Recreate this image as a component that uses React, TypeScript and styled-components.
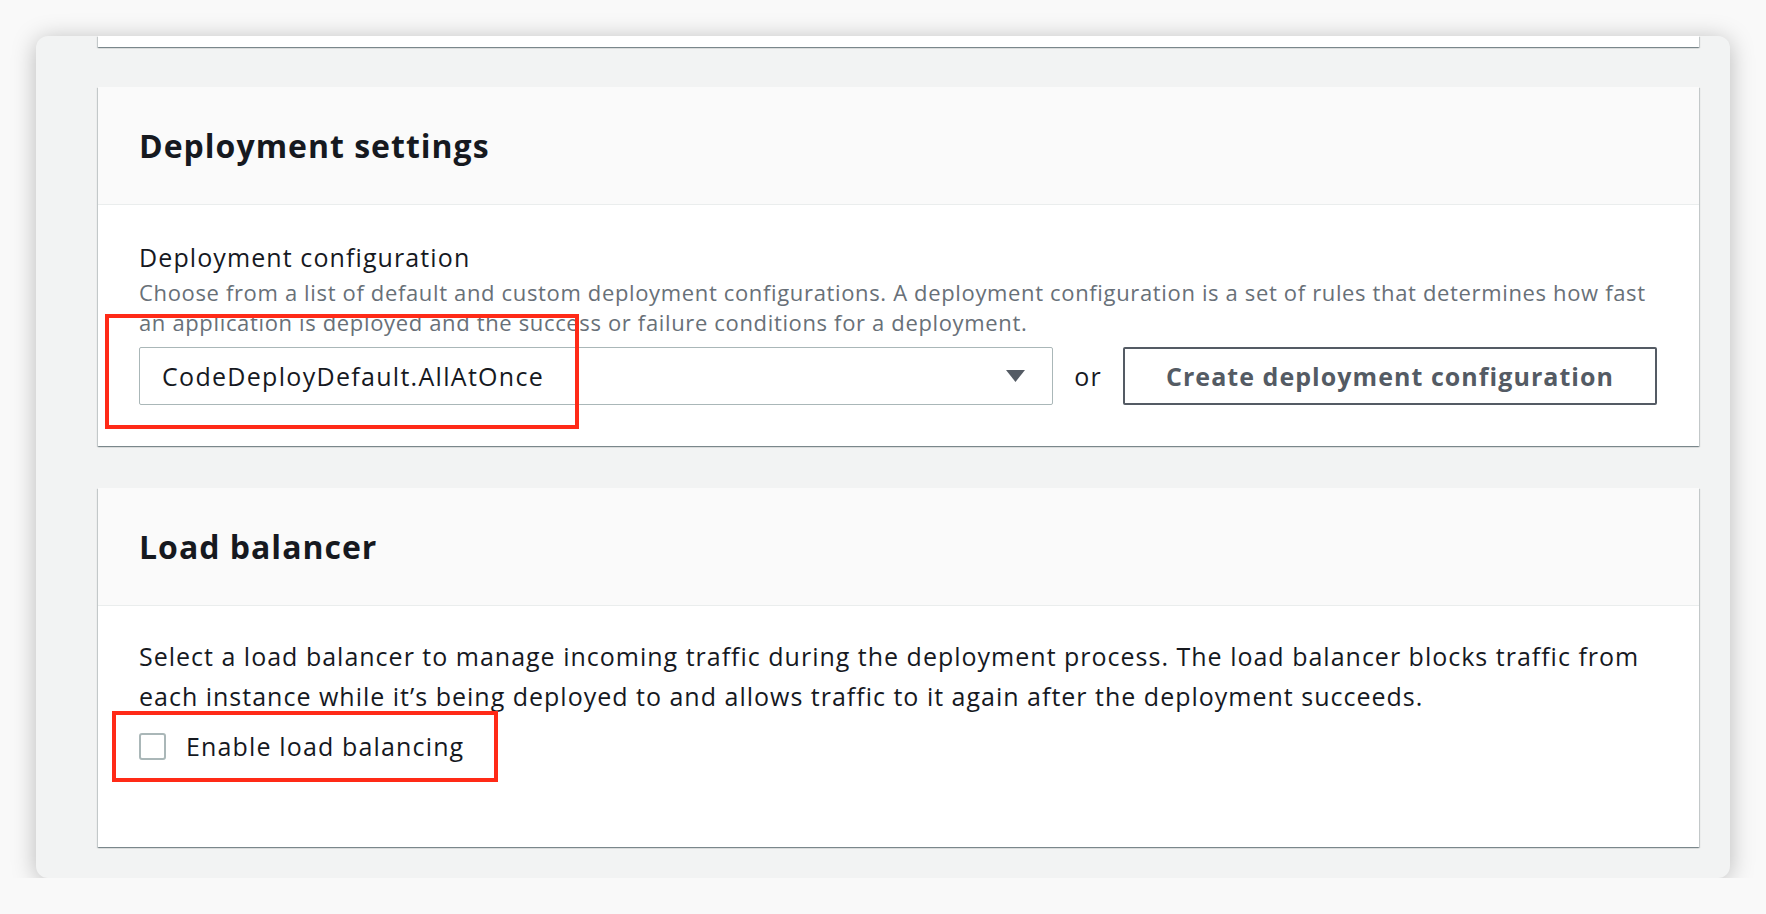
import styled, { createGlobalStyle } from 'styled-components';

const GlobalStyle = createGlobalStyle`
  html, body {
    margin: 0;
    padding: 0;
    background: #f9f9f9;
  }
  body {
    font-family: "Open Sans", "Liberation Sans", Arial, sans-serif;
    color: #16191f;
  }
`;

const Page = styled.div`
  padding: 36px 0 0 36px;
`;

const Frame = styled.div`
  width: 1694px;
  height: 842px;
  box-sizing: border-box;
  padding: 0 31px 0 62px;
  background: #f2f3f3;
  border-radius: 12px;
  box-shadow: 0 3px 24px rgba(0, 0, 0, 0.26);
  overflow: hidden;
  display: flex;
  flex-direction: column;
`;

const cardShadow = `
  box-shadow: 0 1px 1px 0 rgba(0, 28, 36, 0.3),
    1px 1px 1px 0 rgba(0, 28, 36, 0.15),
    -1px 1px 1px 0 rgba(0, 28, 36, 0.15);
`;

const CardTail = styled.div`
  height: 11px;
  flex-shrink: 0;
  background: #fff;
  ${cardShadow}
`;

const Card = styled.section<{ top: number }>`
  position: relative;
  flex-shrink: 0;
  margin-top: ${(p) => p.top}px;
  background: #fff;
  ${cardShadow}
`;

const CardHeader = styled.header`
  height: 117px;
  display: flex;
  align-items: center;
  padding: 0 41px;
  background: #fafafa;
  border-bottom: 1px solid #eaeded;
`;

const Heading = styled.h2`
  margin: 0;
  font-size: 32px;
  font-weight: 700;
  color: #16191f;
  letter-spacing: 1px;
`;

const CardBody = styled.div<{ pad: string }>`
  padding: ${(p) => p.pad};
`;

const Label = styled.div`
  font-size: 25px;
  line-height: 30px;
  letter-spacing: 1.1px;
  color: #16191f;
  margin-bottom: 5px;
`;

const Description = styled.div`
  font-size: 22px;
  line-height: 30px;
  letter-spacing: 0.65px;
  color: #687078;
`;

const ControlRow = styled.div`
  display: flex;
  align-items: center;
  margin-top: 10px;
`;

const Select = styled.div`
  width: 914px;
  height: 58px;
  box-sizing: border-box;
  display: flex;
  align-items: center;
  justify-content: space-between;
  padding: 0 26px 0 22px;
  border: 1px solid #aab7b8;
  border-radius: 2px;
  font-size: 25px;
  letter-spacing: 1.3px;
  color: #16191f;
`;

const Or = styled.span`
  width: 70px;
  text-align: center;
  font-size: 25px;
  letter-spacing: 1px;
  color: #16191f;
`;

const Button = styled.button`
  width: 534px;
  height: 58px;
  box-sizing: border-box;
  border: 2px solid #545b64;
  border-radius: 2px;
  background: #fff;
  color: #545b64;
  font-family: inherit;
  font-size: 25px;
  font-weight: 700;
  letter-spacing: 1.05px;
`;

const Text = styled.p`
  margin: 0;
  font-size: 25px;
  line-height: 40px;
  letter-spacing: 1px;
  color: #16191f;
`;

const CheckRow = styled.label`
  display: flex;
  align-items: center;
  gap: 20px;
  height: 40px;
  margin-top: 10px;
  font-size: 25px;
  letter-spacing: 1.15px;
  color: #16191f;
`;

const Box = styled.span`
  width: 27px;
  height: 27px;
  box-sizing: border-box;
  border: 2px solid #aab7b8;
  border-radius: 3px;
  background: #fff;
`;

// red annotation frames drawn over the screenshot
const Marker = styled.div<{ x: number; y: number; w: number; h: number }>`
  position: absolute;
  left: ${(p) => p.x}px;
  top: ${(p) => p.y}px;
  width: ${(p) => p.w}px;
  height: ${(p) => p.h}px;
  box-sizing: border-box;
  border: 4px solid #ff2a17;
  pointer-events: none;
`;

const Caret = () => (
  <svg width="21" height="14" viewBox="0 0 21 14">
    <path d="M1 1h19L10.5 13z" fill="#545b64" />
  </svg>
);

function App() {
  return (
    <>
      <GlobalStyle />
      <Page>
        <Frame>
          <CardTail />
          <Card top={40}>
            <CardHeader>
              <Heading>Deployment settings</Heading>
            </CardHeader>
            <CardBody pad="37px 41px 41px">
              <Label>Deployment configuration</Label>
              <Description>
                Choose from a list of default and custom deployment configurations. A deployment configuration is a set of rules that determines how fast an application is deployed and the success or failure conditions for a deployment.
              </Description>
              <ControlRow>
                <Select>
                  <span>CodeDeployDefault.AllAtOnce</span>
                  <Caret />
                </Select>
                <Or>or</Or>
                <Button>Create deployment configuration</Button>
              </ControlRow>
            </CardBody>
            <Marker x={7} y={227} w={474} h={115} />
          </Card>
          <Card top={42}>
            <CardHeader>
              <Heading>Load balancer</Heading>
            </CardHeader>
            <CardBody pad="30px 41px 81px">
              <Text>
                Select a load balancer to manage incoming traffic during the deployment process. The load balancer blocks traffic from each instance while it’s being deployed to and allows traffic to it again after the deployment succeeds.
              </Text>
              <CheckRow>
                <Box />
                Enable load balancing
              </CheckRow>
            </CardBody>
            <Marker x={14} y={223} w={386} h={71} />
          </Card>
        </Frame>
      </Page>
    </>
  );
}

export default App;
